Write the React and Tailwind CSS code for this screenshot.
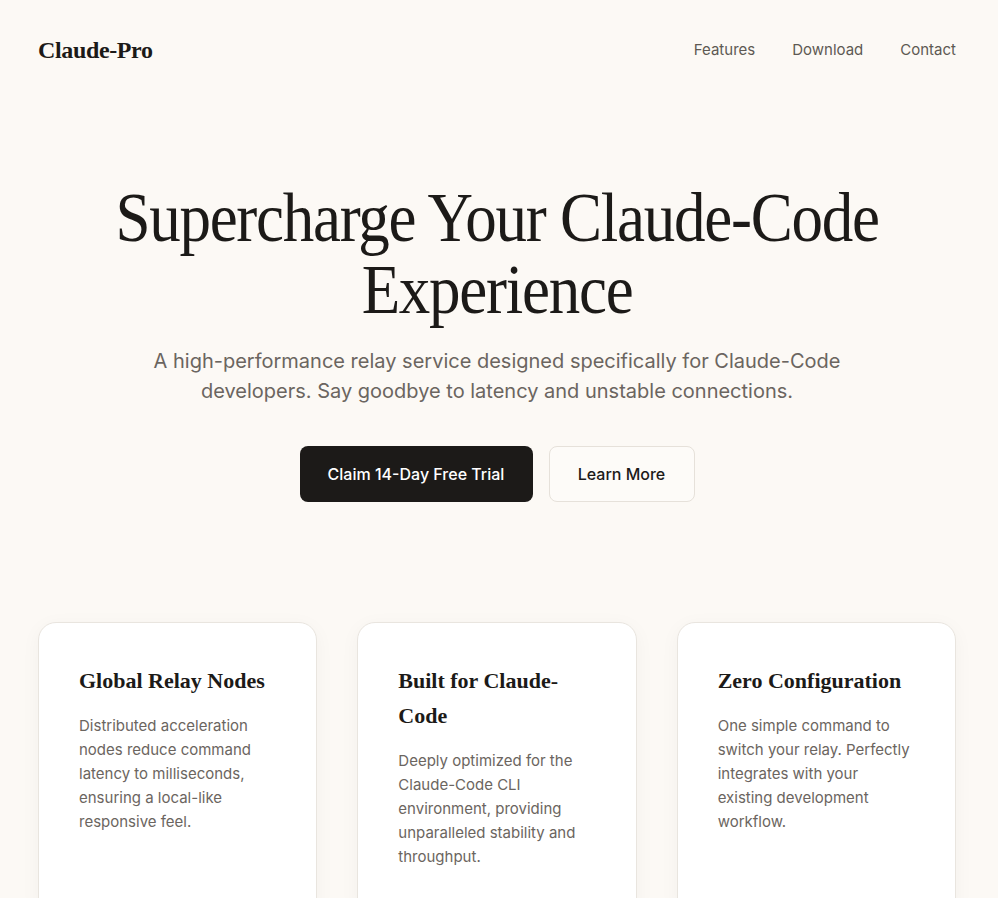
export default function App() {
  const cards = [
    {
      t: "Global Relay Nodes",
      d: "Distributed acceleration nodes reduce command latency to milliseconds, ensuring a local-like responsive feel.",
    },
    {
      t: "Built for Claude-Code",
      d: "Deeply optimized for the Claude-Code CLI environment, providing unparalleled stability and throughput.",
    },
    {
      t: "Zero Configuration",
      d: "One simple command to switch your relay. Perfectly integrates with your existing development workflow.",
    },
  ];
  return (
    <div
      className="min-h-[898px] bg-[#fcf9f5] text-[#1c1a18] pl-[38px] pr-[42px]"
      style={{ fontFamily: 'Inter, "Noto Sans", sans-serif' }}
    >
      <header className="flex items-center justify-between h-[100px]">
        <div className="text-[24px] font-semibold tracking-[-0.015em] text-[#1c1a18] font-['Liberation_Serif',serif]">
          Claude-Pro
        </div>
        <nav className="flex items-center gap-[37px] text-[15px] text-[#5e5953]">
          <a>Features</a>
          <a>Download</a>
          <a>Contact</a>
        </nav>
      </header>

      <section className="flex flex-col items-center text-center pt-[82px]">
        <h1 className="text-[70px] leading-[72px] tracking-[-0.02em] text-[#1c1a18] max-w-[900px] scale-x-[0.9] font-['Liberation_Serif',serif]">
          Supercharge Your Claude-Code Experience
        </h1>
        <p className="mt-[20px] text-[20px] leading-[30px] text-[#6b6560] max-w-[700px]">
          A high-performance relay service designed specifically for Claude-Code developers. Say goodbye to latency and
          unstable connections.
        </p>
        <div className="flex gap-4 mt-[40px]">
          <button className="h-[56px] w-[233px] rounded-lg bg-[#1c1a18] text-white text-[16px] font-medium">
            Claim 14-Day Free Trial
          </button>
          <button className="h-[56px] w-[146px] rounded-lg border border-[#e6e1da] bg-[#fdfbf8] text-[#1c1a18] text-[16px] font-medium">
            Learn More
          </button>
        </div>
      </section>

      <section className="grid grid-cols-3 gap-[40px] mt-[120px]">
        {cards.map((c) => (
          <div
            key={c.t}
            className="bg-white border border-[#e9e5df] rounded-[18px] px-[40px] pt-[40px] pb-[40px] min-h-[300px] shadow-[0_4px_20px_rgba(60,40,20,0.04)]"
          >
            <h3 className="text-[22px] leading-[35px] font-semibold text-[#1c1a18] font-['Liberation_Serif',serif]">
              {c.t}
            </h3>
            <p className="mt-[16px] text-[15px] leading-[24px] text-[#6b6560]">{c.d}</p>
          </div>
        ))}
      </section>
    </div>
  );
}
